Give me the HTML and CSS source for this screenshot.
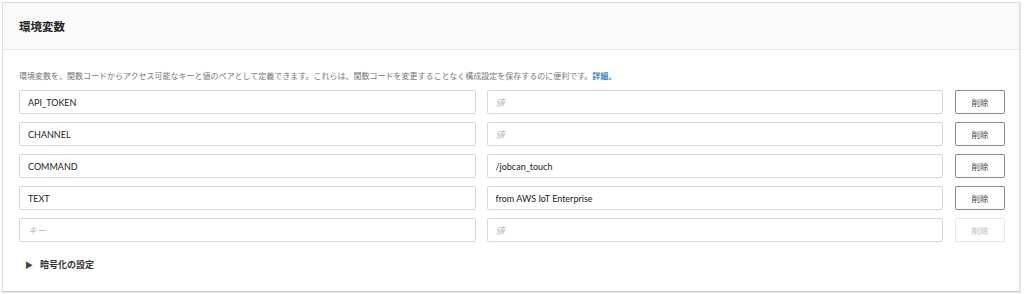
FILE: index.html
```html
<!DOCTYPE html>
<html lang="ja">
<head>
    <meta charset="UTF-8">
    <title>環境変数</title>
    <link rel="stylesheet" href="styles.css">
</head>
<body>
<div class="panel">
    <div class="panel-head">
        <h2 class="title">環境変数</h2>
    </div>
    <div class="panel-body">
        <p class="desc">環境変数を、関数コードからアクセス可能なキーと値のペアとして定義できます。これらは、関数コードを変更することなく構成設定を保存するのに便利です。<a href="#">詳細。</a></p>
        <div class="rows">
            <div class="row">
                <input class="field" type="text" value="API_TOKEN" placeholder="キー">
                <input class="field" type="text" value="" placeholder="値">
                <button class="btn">削除</button>
            </div>
            <div class="row">
                <input class="field" type="text" value="CHANNEL" placeholder="キー">
                <input class="field" type="text" value="" placeholder="値">
                <button class="btn">削除</button>
            </div>
            <div class="row">
                <input class="field" type="text" value="COMMAND" placeholder="キー">
                <input class="field" type="text" value="/jobcan_touch" placeholder="値">
                <button class="btn">削除</button>
            </div>
            <div class="row">
                <input class="field" type="text" value="TEXT" placeholder="キー">
                <input class="field" type="text" value="from AWS IoT Enterprise" placeholder="値">
                <button class="btn">削除</button>
            </div>
            <div class="row">
                <input class="field" type="text" value="" placeholder="キー">
                <input class="field" type="text" value="" placeholder="値">
                <button class="btn" disabled>削除</button>
            </div>
        </div>
        <div class="toggle"><span class="arrow">&#9654;</span>暗号化の設定</div>
    </div>
</div>
</body>
</html>
```

FILE: styles.css
```css
*{  margin: 0;
    padding: 0;
    box-sizing: border-box;
}
body{
    background: #fff;
    font-family: Lato, "Noto Sans CJK JP", sans-serif;
    color: #333;
}
a{
    text-decoration: none;
    color: #3f86c6;
    font-weight: 700;
}
.panel{
    margin: 2px 4px 2px 2px;
    height: 290px;
    border: 1px solid #dcdcdc;
    border-bottom-color: #c8c8c8;
    box-shadow: 1px 1px 1px rgba(0,0,0,0.08);
    background: #fff;
}
.panel-head{
    height: 47px;
    background: #fafafa;
    border-bottom: 1px solid #e6e6e6;
    display: flex;
    align-items: center;
    padding-left: 16px;
}
.title{
    font-size: 11.5px;
    font-weight: 700;
    color: #222;
}
.panel-body{
    padding: 20px 14px 0 16px;
}
.desc{
    font-size: 8px;
    line-height: 12px;
    color: #777;
    white-space: nowrap;
}
.rows{
    margin-top: 8px;
    display: flex;
    flex-direction: column;
    gap: 8px;
}
.row{
    display: flex;
    gap: 11px;
}
.field{
    flex: 1;
    min-width: 0;
    height: 24px;
    border: 1px solid #d3d8db;
    border-radius: 2px;
    padding: 0 8px;
    font-family: Lato, "Noto Sans CJK JP", sans-serif;
    font-size: 9px;
    color: #222;
    background: #fff;
}
.field::placeholder{
    color: #bbb;
    font-style: italic;
}
.btn{
    width: 50px;
    height: 24px;
    margin-left: 1px;
    border: 1px solid #8a8a8a;
    border-radius: 2px;
    background: #fff;
    font-family: "Noto Sans CJK JP", sans-serif;
    font-size: 8.5px;
    color: #444;
}
.btn:disabled{
    border-color: #e6e6e6;
    color: #bbb;
}
.toggle{
    margin: 17px 0 0 6px;
    font-size: 9px;
    line-height: 12px;
    font-weight: 700;
    color: #333;
}
.arrow{
    font-size: 8px;
    margin-right: 7px;
    color: #444;
}
```
